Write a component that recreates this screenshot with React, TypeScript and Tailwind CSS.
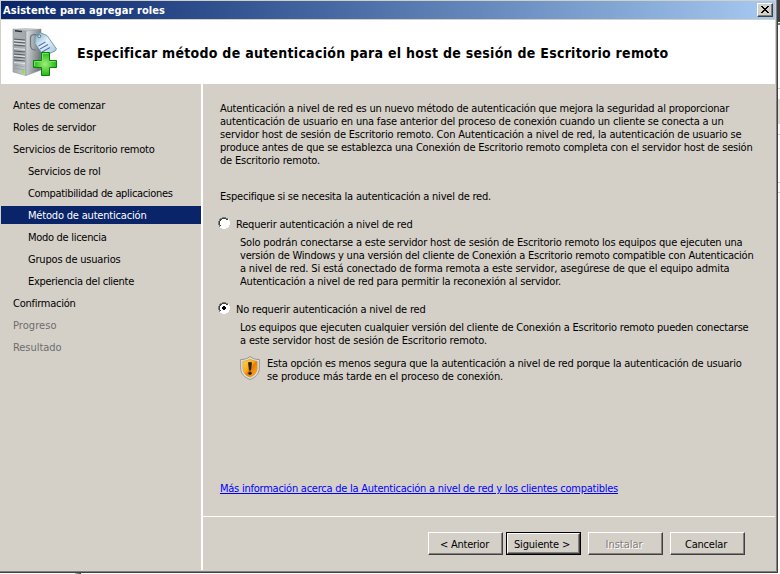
import { useLayoutEffect, useRef, useState } from "react";

type LineProps = { text: string; width: number; className?: string };

function Line({ text, width, className = "" }: LineProps) {
  const ref = useRef<HTMLSpanElement>(null);
  const [spacing, setSpacing] = useState(0);
  useLayoutEffect(() => {
    if (ref.current) {
      setSpacing((width - ref.current.getBoundingClientRect().width) / text.length);
    }
  }, [text, width]);
  return (
    <div className={`whitespace-pre ${className}`}>
      <span ref={ref} style={{ letterSpacing: spacing }}>{text}</span>
    </div>
  );
}

function ServerIcon() {
  return (
    <svg className="block h-[52px] w-[48px]" viewBox="0 0 48 52">
      <defs>
        <linearGradient id="front" x1="0" x2="1" y1="0" y2="1">
          <stop offset="0" stopColor="#aab0b4" />
          <stop offset="0.5" stopColor="#a3a9ad" />
          <stop offset="1" stopColor="#ced2d4" />
        </linearGradient>
        <linearGradient id="side" x1="0" x2="1" y1="0" y2=".3">
          <stop offset="0" stopColor="#e0e3e5" />
          <stop offset=".5" stopColor="#a9afb3" />
          <stop offset="1" stopColor="#747b80" />
        </linearGradient>
        <linearGradient id="tag" x1="0" x2="1" y1="0" y2="1">
          <stop offset="0" stopColor="#78a6bd" />
          <stop offset="0.45" stopColor="#e4f2fa" />
          <stop offset="1" stopColor="#9dc2d8" />
        </linearGradient>
        <radialGradient id="plus">
          <stop offset="0" stopColor="#a0f078" />
          <stop offset="1" stopColor="#25b516" />
        </radialGradient>
      </defs>
      <path d="M1 2 L13 1 L29 2 L14 4Z" fill="#c3c9cd" />
      <path d="M1 2 L14 4 V48.5 L1 45Z" fill="url(#front)" stroke="#8b9297" strokeWidth=".6" />
      <path d="M14 4 L29 2 V43 L14 48.5Z" fill="url(#side)" stroke="#81888e" strokeWidth=".5" />
      <path d="M3 3.8 L10 4.6" stroke="#262b30" strokeWidth="1.4" />
      <path d="M2 12 L13 13 M2 15 L13 16 M2 18 L13 19 M2 24 L13 25 M2 27 L13 28 M2 30 L13 31 M2 33 L13 34" stroke="#535a60" strokeWidth="1.1" />
      <path d="M2 13.5 L13 14.5 M2 16.5 L13 17.5 M2 21.5 L13 22.5 M2 28.5 L13 29.5 M2 35.5 L13 36.5" stroke="#eef2f4" strokeWidth=".8" />
      <path d="M2 38 L13 40 M2 41 L13 43" stroke="#8c9499" strokeWidth=".6" />
      <path d="M10 43.5 L12.5 44 V46.5 L10 46Z" fill="#83ed18" />
      <path d="M27 9 C22 7 18.5 7 18.5 11 V18 C18.5 22 20 23 24 23" fill="none" stroke="#697379" strokeWidth="1.2" />
      <path d="M23 9.5 L28 5.5 L35 8.5 L44.5 22 L43 24 L32 29 L23 16.5Z" fill="url(#tag)" stroke="#6794ac" strokeWidth=".9" />
      <circle cx="27.2" cy="9.2" r="1.5" fill="#d8d8d8" stroke="#456878" strokeWidth=".8" />
      <path d="M26.5 19 L33.5 15 M28 22 L36 17.5 M30 25 L38 20.5" stroke="#5872b8" strokeWidth="1.1" />
      <path d="M29.5 25.5 H37.5 V33.5 H44.5 V40.5 H37.5 V48.5 H29.5 V40.5 H21.5 V33.5 H29.5Z" fill="url(#plus)" stroke="#07820a" />
      <path d="M30.5 34.5 V26.5 H36.5 M22.5 39 V34.5 H30.5 M37 34.5 H43.5" fill="none" stroke="#78e85c" />
    </svg>
  );
}

function Shield() {
  return (
    <svg className="block h-6 w-5" viewBox="0 0 20 24">
      <defs>
        <linearGradient id="amber" x1="0" x2="1" y1="0" y2="1">
          <stop offset="0" stopColor="#ffd255" />
          <stop offset=".45" stopColor="#f9ae18" />
          <stop offset=".55" stopColor="#ef7b00" />
          <stop offset="1" stopColor="#ffb72b" />
        </linearGradient>
      </defs>
      <path d="M10 .5 C7 3 4 3.5 .7 3.5 V12 C.7 18 5 21.5 10 23.5 C15 21.5 19.3 18 19.3 12 V3.5 C16 3.5 13 3 10 .5Z" fill="#e6e5df" stroke="#8c8c88" strokeWidth=".9" />
      <path d="M10 2.8 C7.5 4.6 5 5 2.8 5.2 V12 C2.8 17 6 19.7 10 21.3 C14 19.7 17.2 17 17.2 12 V5.2 C15 5 12.5 4.6 10 2.8Z" fill="url(#amber)" stroke="#c38b36" strokeWidth=".5" />
      <path d="M8 6.6 Q10 5.6 12 6.6 L11 14.4 H9Z" fill="#282522" />
      <circle cx="10" cy="17.2" r="1.7" fill="#282522" />
    </svg>
  );
}

function Radio({ checked = false }: { checked?: boolean }) {
  return (
    <svg className="-mt-px -ml-[2px] block size-3" viewBox="0 0 12 12" shapeRendering="crispEdges">
      <path d="M4 1H8V2H10V4H11V8H10V10H8V11H4V10H2V8H1V4H2V2H4Z" fill="#fff" />
      <path d="M4 0H8V1H10V2H8V1H4V2H2V4H1V8H2V10H1V8H0V4H1V2H2V1H4Z" fill="#808080" />
      <path d="M4 1H8V2H10V3H8V2H4V3H3V4H2V8H3V9H2V8H1V4H2V2H4Z" fill="#404040" />
      <path d="M10 2H11V4H12V8H11V10H10V11H8V12H4V11H2V10H4V11H8V10H10V8H11V4H10Z" fill="#fff" />
      {checked && <path d="M5 4H7V5H8V7H7V8H5V7H4V5H5Z" fill="#000" />}
    </svg>
  );
}

const steps = [
  { text: "Antes de comenzar", width: 92, row: "pl-3" },
  { text: "Roles de servidor", width: 83, row: "pl-3" },
  { text: "Servicios de Escritorio remoto", width: 141.5, row: "pl-3" },
  { text: "Servicios de rol", width: 72.5, row: "pl-[27px]" },
  { text: "Compatibilidad de aplicaciones", width: 144.5, row: "pl-[27px]" },
  { text: "Método de autenticación", width: 118.5, row: "pl-[27px] bg-[#0a246a] text-white" },
  { text: "Modo de licencia", width: 78.5, row: "pl-[27px]" },
  { text: "Grupos de usuarios", width: 92.5, row: "pl-[27px]" },
  { text: "Experiencia del cliente", width: 106, row: "pl-[27px]" },
  { text: "Confirmación", width: 62.5, row: "pl-3" },
  { text: "Progreso", width: 43.5, row: "pl-3 text-[#6d6d6d]" },
  { text: "Resultado", width: 48.5, row: "pl-3 text-[#6d6d6d]" },
];

const intro = [
  { text: "Autenticación a nivel de red es un nuevo método de autenticación que mejora la seguridad al proporcionar", width: 509 },
  { text: "autenticación de usuario en una fase anterior del proceso de conexión cuando un cliente se conecta a un", width: 503.5 },
  { text: "servidor host de sesión de Escritorio remoto. Con Autenticación a nivel de red, la autenticación de usuario se", width: 521.5 },
  { text: "produce antes de que se establezca una Conexión de Escritorio remoto completa con el servidor host de sesión", width: 532.5 },
  { text: "de Escritorio remoto.", width: 100 },
];

const required = [
  { text: "Solo podrán conectarse a este servidor host de sesión de Escritorio remoto los equipos que ejecuten una", width: 502.5 },
  { text: "versión de Windows y una versión del cliente de Conexión a Escritorio remoto compatible con Autenticación", width: 513.5 },
  { text: "a nivel de red. Si está conectado de forma remota a este servidor, asegúrese de que el equipo admita", width: 489.5 },
  { text: "Autenticación a nivel de red para permitir la reconexión al servidor.", width: 321 },
];

const raised = "border border-t-white border-l-white border-r-[#404040] border-b-[#404040] shadow-[inset_-1px_-1px_0_#808080]";

export default function App() {
  return (
    <div className="flex h-[574px] w-[780px] flex-col overflow-hidden bg-white font-['DejaVu_Sans_Condensed','DejaVu_Sans',sans-serif] text-[11px] leading-[13px] text-black [font-stretch:condensed]">
      <div className="flex h-[573px]">
        <div className="flex w-[778px] flex-col border-r border-b border-[#404040] bg-[#d4d0c8] pt-px pl-px shadow-[inset_-1px_-1px_0_#808080]">
          <header className="mr-[2px] flex h-[18px] shrink-0 items-center justify-between bg-linear-to-r from-[#0a246a] to-[#a6caf0] pr-[2px] pl-[2px]">
            <Line text="Asistente para agregar roles" width={162} className="font-bold text-white" />
            <button className={`flex h-[14px] w-4 items-start justify-center bg-[#d4d0c8] pt-[2px] ${raised}`}>
              <svg className="h-[7px] w-2" viewBox="0 0 8 7" shapeRendering="crispEdges">
                <path d="M0 0H2V1H3V2H5V1H6V0H8V1H7V2H6V3H5V4H6V5H7V6H8V7H6V6H5V5H3V6H2V7H0V6H1V5H2V4H3V3H2V2H1V1H0Z" />
              </svg>
            </button>
          </header>
          <div className="mt-px mr-[2px] flex h-16 shrink-0 items-start bg-white pt-[7px] pl-[11px]">
            <ServerIcon />
            <Line text="Especificar método de autenticación para el host de sesión de Escritorio remoto" width={591} className="mt-[18px] ml-[17px] text-[14px] leading-4 font-bold" />
          </div>
          <div className="mr-[2px] flex min-h-0 flex-1">
            <nav className="w-[200px] shrink-0 pt-3">
              {steps.map((s) => (
                <div key={s.text} className={`mb-1 flex h-[18px] items-center ${s.row}`}>
                  <Line text={s.text} width={s.width} />
                </div>
              ))}
            </nav>
            <div className="mb-[2px] w-[2px] shrink-0 bg-white" />
            <main className="flex min-w-0 flex-1 flex-col">
              <section className="h-[432px] shrink-0 pt-[18px] pl-[17px]">
                {intro.map((s) => <Line key={s.text} {...s} />)}
                <Line text="Especifique si se necesita la autenticación a nivel de red." width={271} className="mt-[23px]" />
                <div className="mt-[15px] flex h-[13px] gap-[6px]">
                  <Radio />
                  <Line text="Requerir autenticación a nivel de red" width={176.5} />
                </div>
                <div className="mt-[5px] pl-5">{required.map((s) => <Line key={s.text} {...s} />)}</div>
                <div className="mt-[15px] flex h-[13px] gap-[6px]">
                  <Radio checked />
                  <Line text="No requerir autenticación a nivel de red" width={189.5} />
                </div>
                <div className="mt-[5px] pl-5">
                  <Line text="Los equipos que ejecuten cualquier versión del cliente de Conexión a Escritorio remoto pueden conectarse" width={508.5} />
                  <Line text="a este servidor host de sesión de Escritorio remoto." width={247} />
                </div>
                <div className="mt-[9px] flex gap-[7px] pl-5">
                  <Shield />
                  <div className="pt-px">
                    <Line text="Esta opción es menos segura que la autenticación a nivel de red porque la autenticación de usuario" width={474.5} />
                    <Line text="se produce más tarde en el proceso de conexión." width={236} />
                  </div>
                </div>
                <Line text="Más información acerca de la Autenticación a nivel de red y los clientes compatibles" width={398} className="mt-[99px] text-[#0000ff] underline" />
              </section>
              <div className="h-px shrink-0 bg-white" />
              <footer className="flex pt-[15px] pl-[225px]">
                <button className={`flex h-[23px] w-[75px] items-center justify-center pt-px pr-[2px] ${raised}`}><Line text="&lt; Anterior" width={49} /></button>
                <button className="ml-[3px] h-[23px] w-[75px] border border-black">
                  <span className={`flex h-[21px] items-center justify-center pt-px pr-[3px] ${raised}`}><Line text="Siguiente &gt;" width={56} /></span>
                </button>
                <button className={`ml-[7px] flex h-[23px] w-[75px] items-center justify-center pt-px pr-[3px] text-[#808080] [text-shadow:1px_1px_#fff] ${raised}`}><Line text="Instalar" width={37} /></button>
                <button className={`ml-[7px] flex h-[23px] w-[75px] items-center justify-center pt-px pr-[3px] ${raised}`}><Line text="Cancelar" width={42} /></button>
              </footer>
            </main>
          </div>
        </div>
        <aside className="w-[2px]">
          <div className="h-[22px] bg-[#404040]" />
          <div className="mt-px h-[2px] bg-[#777]" />
          <div className="mt-[63px] h-px bg-[#ccc]" />
          <div className="mt-[10px] h-[25px] bg-[#dedbd7]" />
          <div className="mt-[10px] h-px bg-[#ccc]" />
          <div className="mt-[47px] h-px bg-[#ccc]" />
          <div className="mt-[9px] h-px bg-[#ccc]" />
        </aside>
      </div>
      <div className="ml-[75px] h-px w-[6px] bg-linear-to-r from-[#ccc] to-[#404040]" />
    </div>
  );
}
